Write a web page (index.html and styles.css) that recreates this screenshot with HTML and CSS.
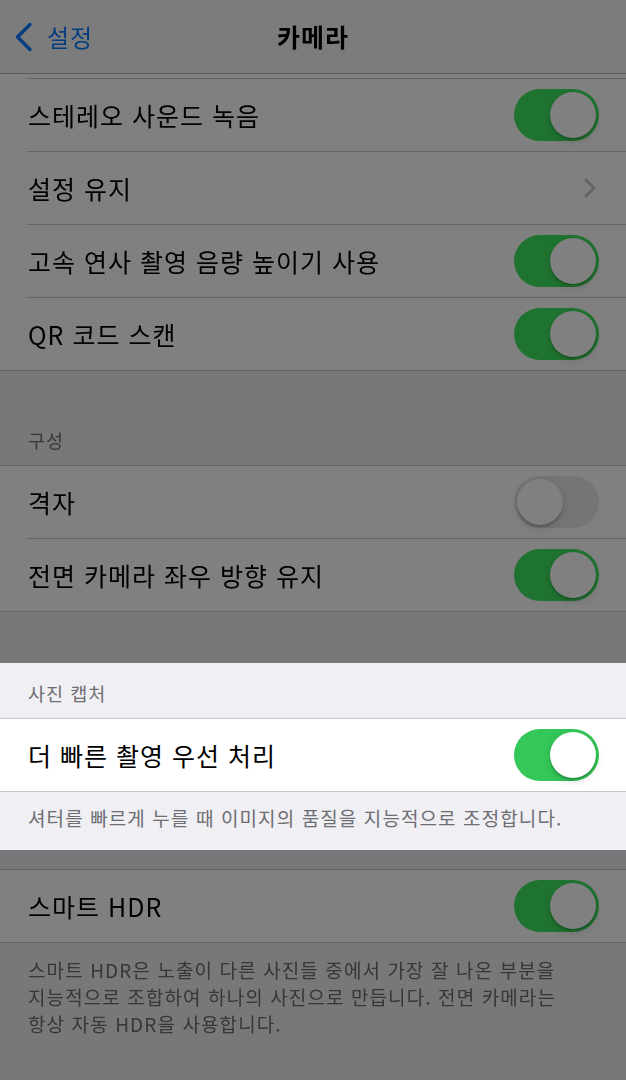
FILE: index.html
```html
<!DOCTYPE html>
<html lang="ko">
<head>
    <meta charset="UTF-8">
    <meta name="viewport" content="width=device-width, initial-scale=1.0">
    <title>카메라</title>
    <link rel="stylesheet" href="styles.css">
</head>
<body>
    <div class="page">
        <header class="nav dim">
            <a class="back" href="#">
                <svg class="back-icon" viewBox="0 0 18 30" aria-hidden="true">
                    <polyline points="15.5,2.5 3,15 15.5,27.5"/>
                </svg>
                <span>설정</span>
            </a>
            <h1 class="nav-title">카메라</h1>
            <span></span>
        </header>

        <section class="dim">
            <div class="group group-open">
                <div class="row row-peek"><div class="row-inner"></div></div>
                <div class="row">
                    <div class="row-inner">
                        <span class="label">스테레오 사운드 녹음</span>
                        <span class="switch on"><span class="knob"></span></span>
                    </div>
                </div>
                <div class="row">
                    <div class="row-inner">
                        <span class="label">설정 유지</span>
                        <svg class="chevron" viewBox="0 0 12 20" aria-hidden="true">
                            <polyline points="2,2 10,10 2,18"/>
                        </svg>
                    </div>
                </div>
                <div class="row">
                    <div class="row-inner">
                        <span class="label">고속 연사 촬영 음량 높이기 사용</span>
                        <span class="switch on"><span class="knob"></span></span>
                    </div>
                </div>
                <div class="row">
                    <div class="row-inner">
                        <span class="label">QR 코드 스캔</span>
                        <span class="switch on"><span class="knob"></span></span>
                    </div>
                </div>
            </div>

            <h2 class="section-header">구성</h2>
            <div class="group">
                <div class="row">
                    <div class="row-inner">
                        <span class="label">격자</span>
                        <span class="switch"><span class="knob"></span></span>
                    </div>
                </div>
                <div class="row">
                    <div class="row-inner">
                        <span class="label">전면 카메라 좌우 방향 유지</span>
                        <span class="switch on"><span class="knob"></span></span>
                    </div>
                </div>
            </div>
            <div class="spacer-top"></div>
        </section>

        <section class="focus">
            <h2 class="section-header section-header-short">사진 캡처</h2>
            <div class="group">
                <div class="row">
                    <div class="row-inner">
                        <span class="label">더 빠른 촬영 우선 처리</span>
                        <span class="switch on"><span class="knob"></span></span>
                    </div>
                </div>
            </div>
            <p class="footer-note">셔터를 빠르게 누를 때 이미지의 품질을 지능적으로 조정합니다.</p>
        </section>

        <section class="dim fill">
            <div class="spacer-small"></div>
            <div class="group">
                <div class="row">
                    <div class="row-inner">
                        <span class="label">스마트 HDR</span>
                        <span class="switch on"><span class="knob"></span></span>
                    </div>
                </div>
            </div>
            <p class="footer-note footer-long">스마트 HDR은 노출이 다른 사진들 중에서 가장 잘 나온 부분을<br>지능적으로 조합하여 하나의 사진으로 만듭니다. 전면 카메라는<br>항상 자동 HDR을 사용합니다.</p>
        </section>
    </div>
</body>
</html>
```

FILE: styles.css
```css
html, body {
    margin: 0;
    padding: 0;
}
body {
    font-family: "Noto Sans CJK KR", "Noto Sans", sans-serif;
    background-color: #77777a;
    color: #000;
    width: 626px;
    overflow: hidden;
}
.page {
    display: flex;
    flex-direction: column;
    min-height: 100vh;
}
section {
    background-color: #efeff4;
}
.fill {
    flex: 1;
}

/* sheet dimmed behind the highlighted section */
.dim {
    filter: brightness(0.5);
}

/* navigation bar */
.nav {
    display: grid;
    grid-template-columns: 1fr auto 1fr;
    align-items: center;
    height: 73px;
    background-color: #f7f7f7;
    border-bottom: 1px solid #b2b2b2;
}
.back {
    display: flex;
    align-items: center;
    gap: 14px;
    padding-left: 14px;
    color: #0a7aff;
    text-decoration: none;
    font-size: 24px;
    letter-spacing: 1px;
}
.back-icon {
    width: 19px;
    height: 30px;
    fill: none;
    stroke: #0a7aff;
    stroke-width: 3.4;
    stroke-linecap: round;
    stroke-linejoin: round;
}
.nav-title {
    margin: 0 0 2px;
    font-size: 25px;
    font-weight: 700;
    letter-spacing: 1px;
}

/* grouped table */
.group {
    background-color: #fff;
    border-top: 1px solid #c8c7cc;
    border-bottom: 1px solid #c8c7cc;
}
.group-open {
    border-top: none;
}
.row {
    padding-left: 27px;
}
.row-inner {
    display: flex;
    align-items: center;
    justify-content: space-between;
    height: 72px;
    padding-right: 27px;
    border-bottom: 1px solid #c8c7cc;
}
.row:last-child .row-inner {
    border-bottom: none;
}
.row-peek .row-inner {
    height: 4px;
}
.label {
    font-size: 25px;
    letter-spacing: 1px;
    padding-left: 1px;
    white-space: nowrap;
}
.chevron {
    width: 12px;
    height: 20px;
    margin-right: 3px;
    fill: none;
    stroke: #c4c4c7;
    stroke-width: 2.6;
    stroke-linecap: round;
    stroke-linejoin: round;
}

/* switch */
.switch {
    display: flex;
    justify-content: flex-start;
    box-sizing: border-box;
    width: 85px;
    height: 52px;
    padding: 3px;
    border-radius: 26px;
    background-color: #e9e9eb;
}
.switch.on {
    justify-content: flex-end;
    background-color: #34c759;
}
.dim .switch.on {
    background-color: #3ee660;
}
.knob {
    width: 46px;
    height: 46px;
    border-radius: 50%;
    background-color: #fff;
    box-shadow: 0 3px 8px rgba(0, 0, 0, 0.15), 0 1px 1px rgba(0, 0, 0, 0.16), 0 3px 1px rgba(0, 0, 0, 0.08);
}

/* section headers and footers */
.section-header {
    box-sizing: border-box;
    height: 94px;
    margin: 0;
    padding: 0 0 12px 28px;
    display: flex;
    align-items: flex-end;
    font-size: 18.5px;
    font-weight: 400;
    letter-spacing: 1px;
    line-height: 26px;
    color: #6d6d72;
}
.section-header-short {
    height: 55px;
}
.spacer-top {
    height: 51px;
}
.spacer-small {
    height: 19px;
}
.footer-note {
    margin: 0;
    padding: 12px 20px 19px 28px;
    font-size: 19px;
    letter-spacing: 1.1px;
    line-height: 27px;
    color: #6d6d72;
    white-space: nowrap;
}
.footer-long {
    padding-top: 13px;
}
```
